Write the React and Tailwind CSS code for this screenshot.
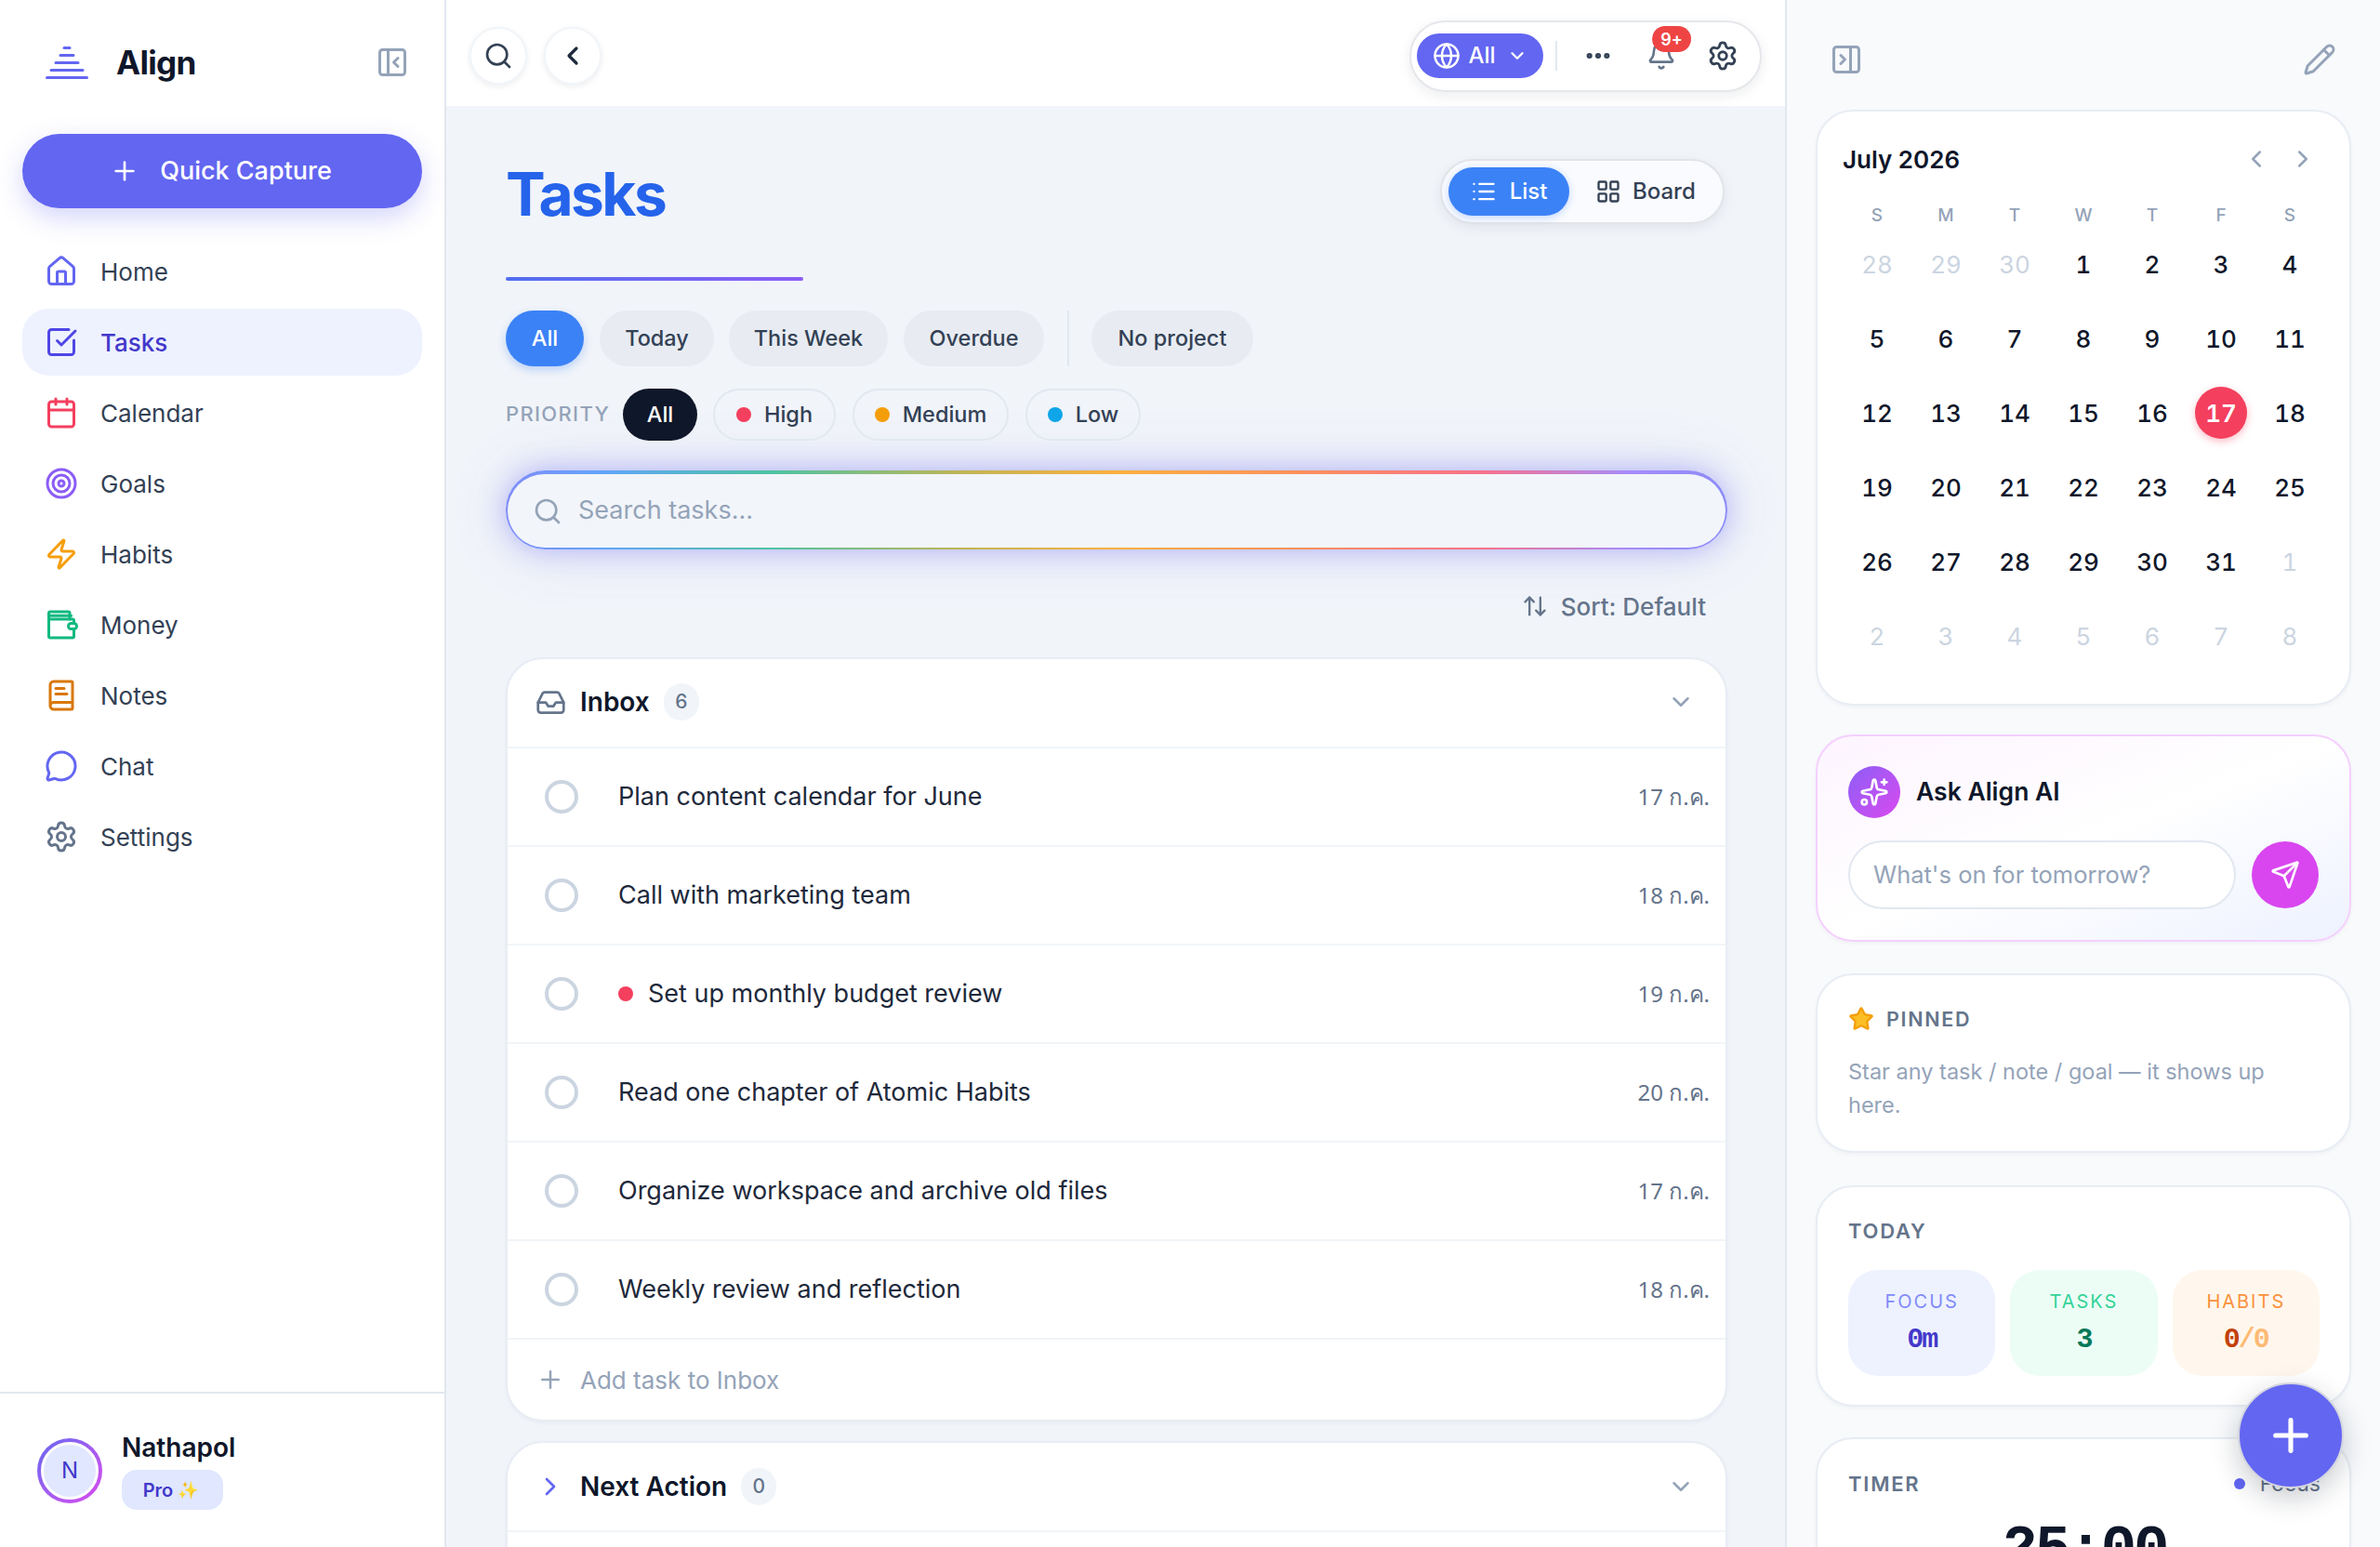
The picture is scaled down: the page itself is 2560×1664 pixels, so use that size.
import React from 'react';
import {
  Home, SquareCheckBig, Calendar, Target, Zap, BookText, MessageCircle, Settings,
  PanelLeftClose, PanelRightClose, Plus, Search, ChevronLeft, ChevronRight, ChevronDown,
  Globe, Ellipsis, Bell, List, LayoutGrid, ArrowUpDown, Inbox, Pencil, Sparkles, Send, Star
} from 'lucide-react';

const WalletIcon = ({ className }) => (
  <svg viewBox="0 0 24 24" fill="none" stroke="currentColor" strokeWidth="2" strokeLinecap="round" strokeLinejoin="round" className={className}>
    <path d="M3 5.500h16" />
    <path d="M18 8V3.600a1 1 0 0 0-1-1H4a1 1 0 0 0-1 1v16.800a1 1 0 0 0 1 1h16a1 1 0 0 0 1-1V15" />
    <path d="M3 5.500V8h17a1 1 0 0 1 1 1v2" />
    <rect x="17" y="11" width="6" height="4" rx="2" />
  </svg>
);

const Logo = () => (
  <svg width="46" height="36" viewBox="0 0 46 36" fill="none" stroke="#6366f1" strokeWidth="3" strokeLinecap="round">
    <path d="M20 2.500h6" />
    <path d="M16 10.500h14" />
    <path d="M11 18.500h24" />
    <path d="M6 26.500h34" />
    <path d="M1.500 34.500h43" />
  </svg>
);

const nav = [
  { label: 'Home', icon: Home, color: 'text-[#6366f1]' },
  { label: 'Tasks', icon: SquareCheckBig, color: 'text-[#4f46e5]', active: true },
  { label: 'Calendar', icon: Calendar, color: 'text-[#f43f5e]' },
  { label: 'Goals', icon: Target, color: 'text-[#8b5cf6]' },
  { label: 'Habits', icon: Zap, color: 'text-[#f59e0b]' },
  { label: 'Money', icon: WalletIcon, color: 'text-[#10b981]' },
  { label: 'Notes', icon: BookText, color: 'text-[#d97706]' },
  { label: 'Chat', icon: MessageCircle, color: 'text-[#6366f1]' },
  { label: 'Settings', icon: Settings, color: 'text-[#64748b]' },
];

const tasks = [
  { title: 'Plan content calendar for June', date: '17 ก.ค.' },
  { title: 'Call with marketing team', date: '18 ก.ค.' },
  { title: 'Set up monthly budget review', date: '19 ก.ค.', dot: true },
  { title: 'Read one chapter of Atomic Habits', date: '20 ก.ค.' },
  { title: 'Organize workspace and archive old files', date: '17 ก.ค.' },
  { title: 'Weekly review and reflection', date: '18 ก.ค.' },
];

const days = [
  [28, 1], [29, 1], [30, 1], [1], [2], [3], [4],
  [5], [6], [7], [8], [9], [10], [11],
  [12], [13], [14], [15], [16], [17], [18],
  [19], [20], [21], [22], [23], [24], [25],
  [26], [27], [28], [29], [30], [31], [1, 1],
  [2, 1], [3, 1], [4, 1], [5, 1], [6, 1], [7, 1], [8, 1],
];

const Sidebar = () => (
  <aside className="w-[480px] shrink-0 h-full bg-white border-r-2 border-[#e2e8f0] flex flex-col">
    <div className="px-6">
      <div className="h-[134px] flex items-center pl-[25px] pr-[14px]">
        <Logo />
        <span className="ml-[30px] text-[35px] font-bold tracking-[-0.02em] text-[#0f172a]">Align</span>
        <PanelLeftClose size={36} strokeWidth={2} className="ml-auto text-[#94a3b8]" />
      </div>
      <button className="mt-[10px] w-full h-20 rounded-full bg-[#6366f1] text-white flex items-center justify-center gap-[22px] pr-[3px] text-[27px] font-medium shadow-[0_10px_28px_rgba(99,102,241,0.28)]">
        <Plus size={32} strokeWidth={2} /> Quick Capture
      </button>
      <nav className="mt-8 flex flex-col gap-1">
        {nav.map(({ label, icon: Icon, color, active }) => (
          <div key={label} className={`h-[72px] rounded-[28px] px-6 flex items-center gap-6 text-[26px] ${active ? 'bg-[#eef2ff] text-[#4338ca] font-medium' : 'text-[#334155]'}`}>
            <Icon className={`w-[36px] h-[36px] ${color}`} />
            {label}
          </div>
        ))}
      </nav>
    </div>
    <div className="mt-auto h-[167px] border-t-2 border-[#e2e8f0] px-10 flex items-center gap-[21px]">
      <div className="w-[70px] h-[70px] rounded-full p-[4px] bg-gradient-to-br from-[#6366f1] to-[#d946ef]">
        <div className="w-full h-full rounded-full bg-[#e0e7ff] border-[3px] border-white flex items-center justify-center text-[24px] text-[#4338ca]">N</div>
      </div>
      <div className="flex flex-col">
        <span className="text-[28px] leading-[32px] font-semibold text-[#0f172a] mt-[2px]">Nathapol</span>
        <span className="mt-[8px] w-[109px] h-[43px] rounded-[16px] bg-[#e0e7ff] flex items-center justify-center gap-[5px] text-[20px] font-semibold text-[#4338ca] pr-[4px]">Pro <span className="text-[18px]">✨</span></span>
      </div>
    </div>
  </aside>
);

const Pill = ({ children, active, className = '' }) => (
  <div className={`h-[60px] rounded-full flex items-center justify-center text-[23.5px] font-medium ${active ? 'bg-[#3b82f6] text-white shadow-[0_4px_10px_rgba(59,130,246,0.3)]' : 'bg-[#e8ecf2] text-[#334155]'} ${className}`}>
    {children}
  </div>
);

const PriorityPill = ({ dot, label, className = '' }) => (
  <div className={`h-[56px] rounded-full border-2 border-[#e2e8f0] flex items-center justify-center gap-[14px] text-[23.5px] font-medium text-[#334155] ${className}`}>
    <span className={`w-[16px] h-[16px] rounded-full ${dot}`} />
    {label}
  </div>
);

const TaskRow = ({ title, date, dot }) => (
  <div className="h-[106px] border-b-2 border-[#f1f5f9] flex items-center pl-[40px] pr-[17px] text-[27px] text-[#1e293b]">
    <span className="w-[36px] h-[36px] rounded-full border-[4px] border-[#cbd5e1] mr-[43px]" />
    {dot && <span className="w-[16px] h-[16px] rounded-full bg-[#f43f5e] mr-[16px]" />}
    <span>{title}</span>
    <span className="ml-auto text-[24px] text-[#64748b] font-['Noto_Sans',Inter,sans-serif]">{date}</span>
  </div>
);

const Main = () => (
  <main className="flex-1 h-full bg-[#f1f4f9] overflow-hidden">
    <header className="h-[114px] bg-white flex items-center justify-between pl-[25px] pr-[25px] pt-[6px]">
      <div className="flex gap-[18px]">
        <button className="w-[62px] h-[62px] rounded-full bg-white border-2 border-[#f1f5f9] shadow-[0_2px_6px_rgba(15,23,42,0.08)] flex items-center justify-center text-[#334155]"><Search size={32} /></button>
        <button className="w-[62px] h-[62px] rounded-full bg-white border-2 border-[#f1f5f9] shadow-[0_2px_6px_rgba(15,23,42,0.08)] flex items-center justify-center text-[#1e293b]"><ChevronLeft size={32} strokeWidth={2.4} /></button>
      </div>
      <div className="w-[379px] h-[77px] rounded-full bg-white border-2 border-[#e5e7eb] shadow-[0_4px_14px_rgba(15,23,42,0.08)] flex items-center pl-[6px]">
        <div className="w-[136px] h-[48px] rounded-full bg-[#6366f1] text-white flex items-center justify-center gap-[8px] text-[24px] font-medium">
          <Globe size={30} /> All <ChevronDown size={22} strokeWidth={2.6} className="ml-[4px]" />
        </div>
        <span className="ml-[13px] w-[2px] h-[32px] bg-[#e2e8f0]" />
        <Ellipsis size={32} strokeWidth={2.6} className="ml-[28px] text-[#334155]" />
        <div className="relative ml-[34px] w-[36px] h-[36px] flex items-center justify-center">
          <Bell size={32} className="text-[#64748b]" />
          <span className="absolute -top-[14px] left-[8px] w-[42px] h-[28px] rounded-full bg-[#ef4444] text-white text-[18px] font-semibold flex items-center justify-center">9+</span>
        </div>
        <Settings size={34} className="ml-[31px] text-[#334155]" />
      </div>
    </header>

    <div className="pl-[64px] pr-[62px]">
      <div className="mt-[58px] h-[126px] flex items-start justify-between">
        <h1 className="text-[64px] leading-[78px] font-bold tracking-[-0.04em] text-[#2563eb] -mt-[2px]">Tasks</h1>
        <div className="w-[306px] h-[70px] mr-[3px] -mt-[1px] rounded-full bg-[#fafbfe] border-2 border-[#e2e4e9] shadow-[0_4px_14px_rgba(15,23,42,0.07)] flex items-center pl-[7px]">
          <div className="w-[130px] h-[52px] rounded-full bg-[#3b82f6] text-white flex items-center justify-center gap-[14px] text-[24px] font-medium shadow-[0_2px_8px_rgba(59,130,246,0.3)]">
            <List size={28} /> List
          </div>
          <div className="ml-[28px] flex items-center gap-3 text-[24px] font-medium text-[#334155]">
            <LayoutGrid size={28} /> Board
          </div>
        </div>
      </div>
      <div className="w-[320px] h-1 rounded-full bg-gradient-to-r from-[#4f6ef0] to-[#8b5cf6]" />

      <div className="mt-8 flex items-center">
        <Pill active className="w-[84px]">All</Pill>
        <Pill className="w-[123px] ml-[17px]">Today</Pill>
        <Pill className="w-[171px] ml-4">This Week</Pill>
        <Pill className="w-[151px] ml-[17px]">Overdue</Pill>
        <span className="w-[2px] h-[60px] bg-[#e2e8f0] ml-[25px]" />
        <Pill className="w-[174px] ml-6">No project</Pill>
      </div>

      <div className="mt-6 flex items-center">
        <span className="w-[126px] text-[22px] font-medium tracking-[0.06em] text-[#94a3b8] -mt-[2px]">PRIORITY</span>
        <div className="w-[80px] h-[56px] rounded-full bg-[#0f172a] text-white flex items-center justify-center text-[23.5px] font-medium">All</div>
        <PriorityPill dot="bg-[#f43f5e]" label="High" className="w-[132px] ml-[17px]" />
        <PriorityPill dot="bg-[#f59e0b]" label="Medium" className="w-[168px] ml-[18px]" />
        <PriorityPill dot="bg-[#0ea5e9]" label="Low" className="w-[124px] ml-[18px]" />
      </div>

      <div className="mt-8 h-[85px] rounded-full pt-[4px] pb-[2px] px-[2px] bg-[linear-gradient(90deg,#818cf8_0%,#60a5fa_8%,#4fc3a1_22%,#c4b454_38%,#fbb040_50%,#fb8f5f_66%,#f8718a_80%,#a78bfa_92%,#8b8cf8_100%)] shadow-[0_0_30px_rgba(99,102,241,0.42),0_0_70px_rgba(99,102,241,0.12)]">
        <div className="w-full h-full rounded-full bg-[#f2f5fa] flex items-center pl-[27px] gap-[17px] text-[27px] text-[#94a3b8]">
          <Search size={32} /> Search tasks...
        </div>
      </div>

      <div className="mt-[44px] mb-[38px] h-[34px] pr-[23px] flex items-center justify-end gap-[14px] text-[26px] font-medium text-[#64748b]">
        <ArrowUpDown size={28} /> Sort: Default
      </div>

      <section className="h-[822px] rounded-[40px] bg-white border-2 border-[#e8edf4] shadow-[0_2px_4px_rgba(15,23,42,0.04)] overflow-hidden">
        <div className="h-[96px] border-b-2 border-[#f1f5f9] flex items-center pl-[30px] pr-[33px] pb-[2px]">
          <Inbox size={33} className="text-[#64748b]" />
          <span className="ml-[15px] text-[28px] font-semibold text-[#0f172a]">Inbox</span>
          <span className="ml-[15px] w-[38px] h-10 rounded-full bg-[#f1f5f9] flex items-center justify-center text-[21px] font-medium text-[#64748b]">6</span>
          <ChevronDown size={30} className="ml-auto text-[#94a3b8]" />
        </div>
        {tasks.map(t => <TaskRow key={t.title} {...t} />)}
        <div className="h-[86px] flex items-center pl-[31px] gap-[17px] text-[26px] text-[#94a3b8]">
          <Plus size={30} /> Add task to Inbox
        </div>
      </section>

      <section className="mt-[21px] h-[300px] rounded-[40px] bg-white border-2 border-[#e8edf4] shadow-[0_2px_4px_rgba(15,23,42,0.04)]">
        <div className="h-[96px] border-b-2 border-[#f1f5f9] flex items-center pl-[30px] pr-[33px]">
          <ChevronRight size={32} className="text-[#6366f1]" />
          <span className="ml-[16px] text-[28px] font-semibold text-[#0f172a]">Next Action</span>
          <span className="ml-[15px] w-[38px] h-10 rounded-full bg-[#f1f5f9] flex items-center justify-center text-[21px] font-medium text-[#64748b]">0</span>
          <ChevronDown size={30} className="ml-auto text-[#94a3b8]" />
        </div>
      </section>
    </div>
  </main>
);

const cardClass = 'rounded-[40px] bg-white border-2 border-[#e8edf4] shadow-[0_2px_4px_rgba(15,23,42,0.04)]';

const StatTile = ({ label, bg, labelColor, children }) => (
  <div className={`h-[114px] rounded-[32px] flex flex-col items-center pt-[22px] ${bg}`}>
    <span className={`text-[20px] leading-[24px] font-normal tracking-[0.1em] ${labelColor}`}>{label}</span>
    <span className="mt-[11px] text-[30px] leading-[36px] font-bold tracking-[-2px] font-['Liberation_Mono',monospace]">{children}</span>
  </div>
);

const RightPanel = () => (
  <aside className="w-[640px] shrink-0 h-full bg-[#f8fafc] border-l-2 border-[#e2e8f0] overflow-hidden pl-[31px] pr-[31px]">
    <div className="h-[118px] flex items-start pt-[46px] pl-[15px] pr-[16px] justify-between text-[#94a3b8]">
      <PanelRightClose size={36} />
      <Pencil size={36} />
    </div>

    <section className={`${cardClass} h-[641px] px-[27px]`}>
      <div className="h-[102px] flex items-center justify-between pr-[8px]">
        <span className="text-[26px] font-semibold text-[#0f172a]">July 2026</span>
        <div className="flex gap-[20px] text-[#94a3b8]">
          <ChevronLeft size={30} />
          <ChevronRight size={30} />
        </div>
      </div>
      <div className="grid grid-cols-7 w-[518px] text-center">
        {['S', 'M', 'T', 'W', 'T', 'F', 'S'].map((d, i) => (
          <span key={i} className="h-[20px] leading-[20px] text-[19px] font-medium text-[#94a3b8]">{d}</span>
        ))}
      </div>
      <div className="grid grid-cols-7 w-[518px] mt-[2px] tabular-nums">
        {days.map(([n, muted], i) => (
          <div key={i} className="h-20 flex items-center justify-center">
            {n === 17 ? (
              <span className="w-[56px] h-[56px] rounded-full bg-[#f43f5e] text-white text-[26px] font-semibold flex items-center justify-center shadow-[0_3px_8px_rgba(244,63,94,0.35)]">{n}</span>
            ) : (
              <span className={`text-[26px] ${muted ? 'text-[#cbd5e1] font-normal' : 'text-[#0f172a] font-medium'}`}>{n}</span>
            )}
          </div>
        ))}
      </div>
    </section>

    <section className="mt-[31px] h-[223px] rounded-[40px] border-2 border-[#f5d0fe] bg-gradient-to-br from-[#fdf4ff] via-white to-[#eef2ff] pl-[33px] pr-[31px] pt-[32px] shadow-[0_2px_4px_rgba(15,23,42,0.04)]">
      <div className="flex items-center gap-[17px]">
        <span className="w-[56px] h-[56px] rounded-full bg-gradient-to-br from-[#8b5cf6] to-[#d946ef] flex items-center justify-center text-white"><Sparkles size={32} /></span>
        <span className="text-[26.5px] font-semibold text-[#0f172a]">Ask Align AI</span>
      </div>
      <div className="mt-[24px] flex items-center gap-[17px]">
        <div className="w-[417px] h-[74px] rounded-full bg-white border-2 border-[#e2e8f0] flex items-center pl-[25px] text-[25.5px] text-[#94a3b8]">What's on for tomorrow?</div>
        <span className="w-[72px] h-[72px] rounded-full bg-[#d946ef] flex items-center justify-center text-white"><Send size={32} /></span>
      </div>
    </section>

    <section className={`${cardClass} mt-[34px] h-[193px] pl-[33px] pr-[31px] pt-[31px]`}>
      <div className="flex items-center gap-[13px]">
        <Star size={28} className="text-[#f59e0b] fill-[#fbbf24]" />
        <span className="text-[21.5px] font-semibold tracking-[0.08em] text-[#64748b]">PINNED</span>
      </div>
      <p className="mt-[23px] text-[23.5px] leading-[36px] text-[#94a3b8]">Star any task / note / goal — it shows up here.</p>
    </section>

    <section className={`${cardClass} mt-[35px] h-[238px] pl-[33px] pr-[32px] pt-[33px]`}>
      <span className="block text-[22px] leading-[28px] font-semibold tracking-[0.08em] text-[#64748b]">TODAY</span>
      <div className="mt-[28px] grid grid-cols-3 gap-4">
        <StatTile label="FOCUS" bg="bg-[#eef2ff]" labelColor="text-[#818cf8]"><span className="text-[#4338ca]">0m</span></StatTile>
        <StatTile label="TASKS" bg="bg-[#ecfdf5]" labelColor="text-[#34d399]"><span className="text-[#047857]">3</span></StatTile>
        <StatTile label="HABITS" bg="bg-[#fff7ed]" labelColor="text-[#fb923c]"><span className="text-[#c2410c]">0</span><span className="text-[#fdba74]">/0</span></StatTile>
      </div>
    </section>

    <section className={`${cardClass} mt-[33px] h-[300px] pl-[33px] pr-[31px] pt-[31px]`}>
      <div className="flex items-center justify-between">
        <span className="text-[22px] leading-[28px] font-semibold tracking-[0.08em] text-[#64748b]">TIMER</span>
        <span className="flex items-center gap-[16px] text-[23px] text-[#64748b]"><span className="w-[12px] h-[12px] rounded-full bg-[#6366f1]" />Focus</span>
      </div>
      <div className="mt-[14px] text-center text-[64px] leading-[80px] font-bold tracking-[-3px] text-[#0f172a] font-['Liberation_Mono',monospace]">25:00</div>
    </section>
  </aside>
);

export default function App() {
  return (
    <div className="relative w-full h-screen flex overflow-hidden font-['Inter',sans-serif]">
      <Sidebar />
      <Main />
      <RightPanel />
      <button className="absolute left-[2407px] top-[1487px] w-[114px] h-[114px] rounded-full bg-[#6366f1] border-2 border-[#d4d6e0] text-white flex items-center justify-center shadow-[0_10px_30px_rgba(15,23,42,0.22)]">
        <Plus size={56} strokeWidth={2.2} />
      </button>
    </div>
  );
}
